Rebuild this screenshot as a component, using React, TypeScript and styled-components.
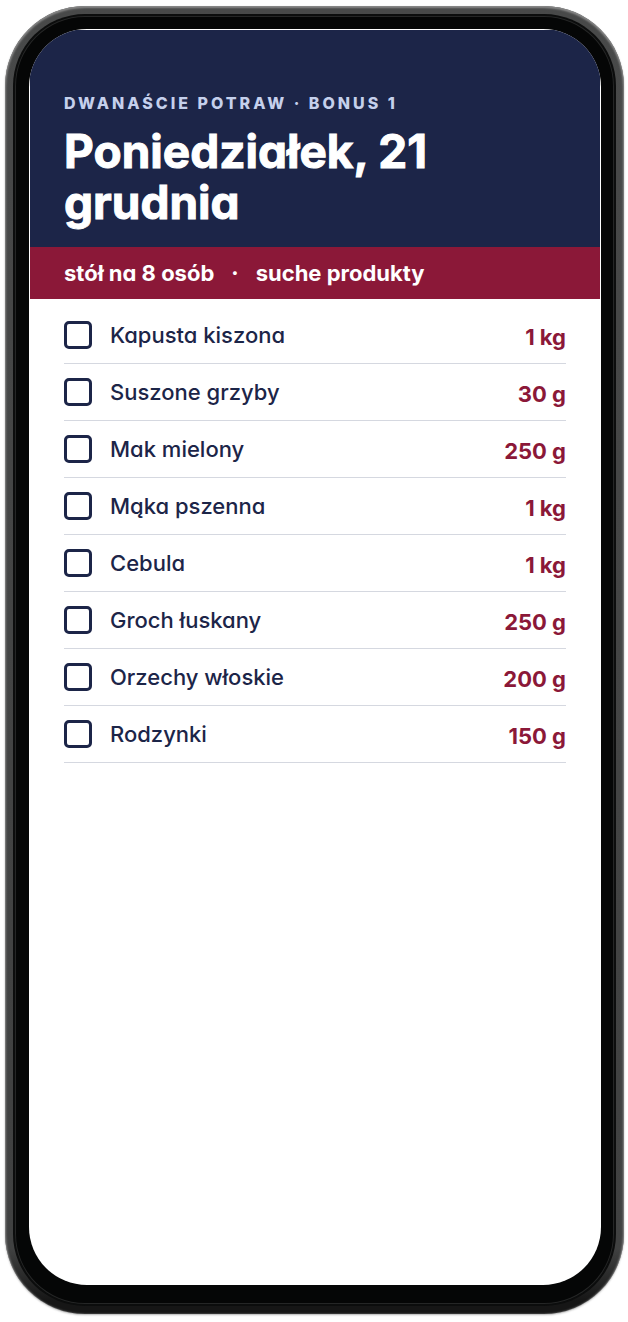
import React, { useState } from 'react';
import styled, { createGlobalStyle } from 'styled-components';

const products = [
  { id: 'kapusta', name: 'Kapusta kiszona', amount: '1 kg' },
  { id: 'grzyby', name: 'Suszone grzyby', amount: '30 g' },
  { id: 'mak', name: 'Mak mielony', amount: '250 g' },
  { id: 'maka', name: 'Mąka pszenna', amount: '1 kg' },
  { id: 'cebula', name: 'Cebula', amount: '1 kg' },
  { id: 'groch', name: 'Groch łuskany', amount: '250 g' },
  { id: 'orzechy', name: 'Orzechy włoskie', amount: '200 g' },
  { id: 'rodzynki', name: 'Rodzynki', amount: '150 g' },
];

function App() {
  const [bought, setBought] = useState<string[]>([]);

  const toggle = (id: string) => {
    setBought((prev) =>
      prev.includes(id) ? prev.filter((item) => item !== id) : [...prev, id]
    );
  };

  return (
    <Page>
      <GlobalStyle />
      <Phone>
        <Bezel>
          <Screen>
            <Header>
              <Eyebrow>Dwanaście potraw · bonus 1</Eyebrow>
              <Title>Poniedziałek, 21 grudnia</Title>
            </Header>
            <Band>
              <span>stół na 8 osób</span>
              <span>·</span>
              <span>suche produkty</span>
            </Band>
            <List>
              {products.map((item) => (
                <Row key={item.id}>
                  <Checkbox
                    type='checkbox'
                    id={item.id}
                    checked={bought.includes(item.id)}
                    onChange={() => toggle(item.id)}
                  />
                  <Name htmlFor={item.id}>{item.name}</Name>
                  <Amount>{item.amount}</Amount>
                </Row>
              ))}
            </List>
          </Screen>
        </Bezel>
      </Phone>
    </Page>
  );
}

const GlobalStyle = createGlobalStyle`
  * {
    box-sizing: border-box;
  }

  body {
    margin: 0;
    background: #fff;
    font-family: Inter, 'Noto Sans', sans-serif;
    /* single-storey a */
    font-feature-settings: 'cv11';
  }
`;

const Page = styled.main`
  display: flex;
  min-height: 100vh;
  padding: 6px 4px 8px 5px;
`;

const Phone = styled.div`
  display: flex;
  flex: 1;
  padding: 10px;
  border-radius: 80px;
  background: linear-gradient(#484949, #404141 95%, #161616 99%);
  box-shadow: inset 0 1px 2px 1px #8a8a8a, 0 1px 2px rgba(0, 0, 0, 0.3);
`;

const Bezel = styled.div`
  display: flex;
  flex: 1;
  padding: 13px 13px 19px 14px;
  border-radius: 70px;
  background: #050606;
  box-shadow: inset 0 0 0 1px #252626, 0 0 0 2px #0c0d0d;
`;

const Screen = styled.div`
  flex: 1;
  overflow: hidden;
  padding: 1px 1px 0;
  border-radius: 58px;
  background: #fff;
`;

const Header = styled.header`
  padding: 62px 34px 19px;
  background: #1c2548;
`;

const Eyebrow = styled.p`
  margin: 0 0 12px;
  color: #c5d0ec;
  font-size: 16px;
  font-weight: 800;
  line-height: 22px;
  letter-spacing: 3px;
  text-transform: uppercase;
`;

const Title = styled.h1`
  margin: 0;
  color: #fff;
  font-size: 46px;
  font-weight: 700;
  line-height: 51px;
  -webkit-text-stroke: 1px #fff;
`;

const Band = styled.div`
  display: flex;
  gap: 17px;
  padding: 11px 34px;
  background: #8b1838;
  color: #fff;
  font-size: 22px;
  font-weight: 700;
  line-height: 30px;
`;

const List = styled.ul`
  margin: 0;
  padding: 8px 34px;
  list-style: none;
`;

const Row = styled.li`
  display: flex;
  align-items: center;
  padding: 14px 0;
  border-bottom: 1px solid #d5d8e0;
  line-height: 28px;
`;

const Checkbox = styled.input`
  appearance: none;
  flex: none;
  width: 28px;
  height: 28px;
  margin: 0 18px 0 0;
  border: 3px solid #1c2548;
  border-radius: 5px;
  background: #fff;

  &:checked {
    background: #1c2548;
  }
`;

const Name = styled.label`
  flex: 1;
  color: #1c2548;
  font-size: 22px;
  font-weight: 500;
`;

const Amount = styled.span`
  padding-top: 2px;
  margin-bottom: -2px;
  color: #8b1838;
  font-size: 22px;
  font-weight: 700;
`;

export default App;
